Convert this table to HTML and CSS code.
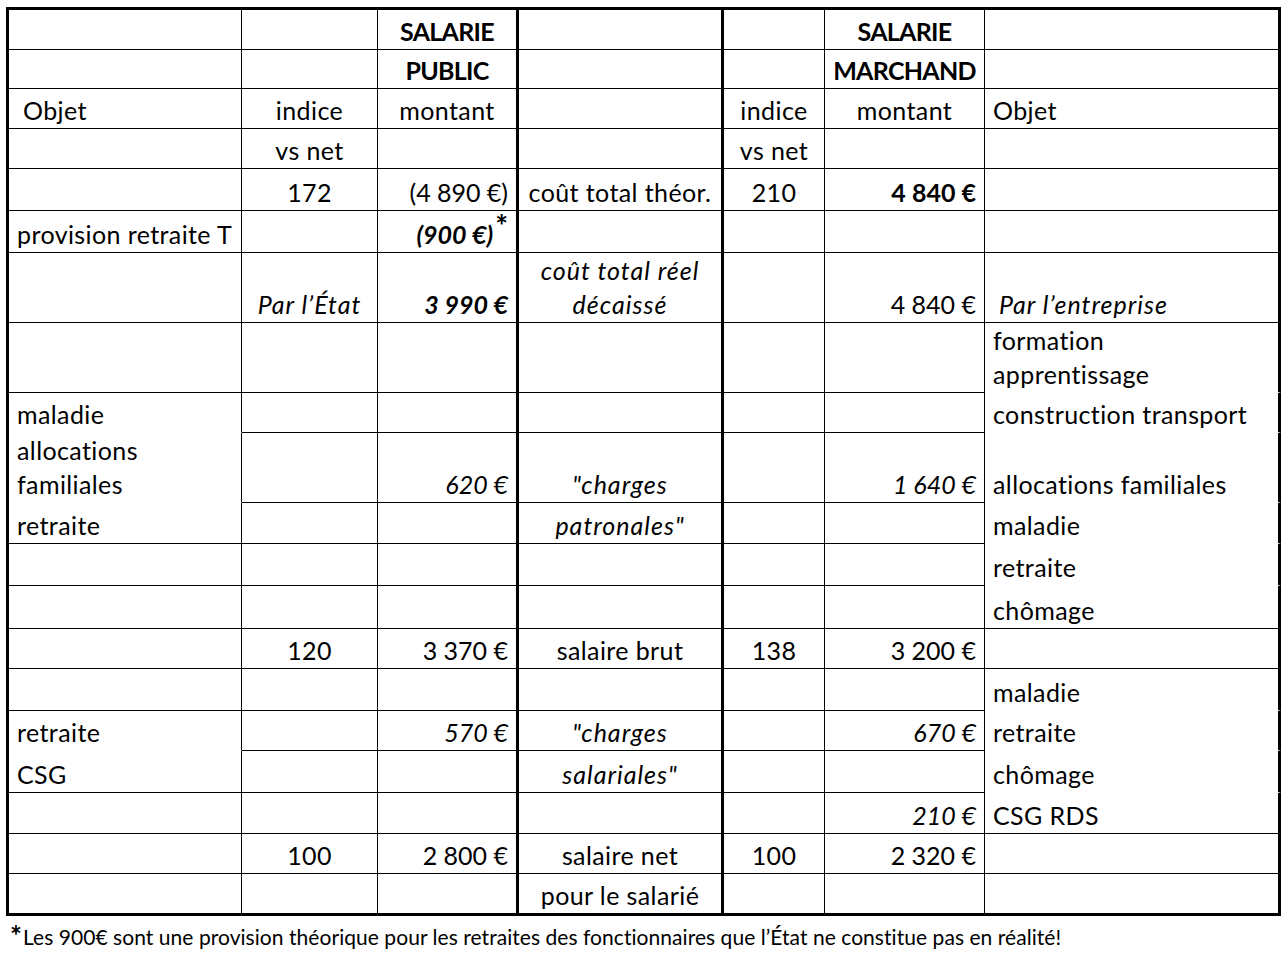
FILE: index.html
```html
<!DOCTYPE html>
<html lang="fr">
<head>
<meta charset="utf-8">
<title>Salarié public / marchand</title>
<link rel="stylesheet" href="styles.css">
</head>
<body>
<table class="sheet">
  <colgroup>
    <col class="w1"><col class="w2"><col class="w3"><col class="w4"><col class="w5"><col class="w6"><col class="w7">
  </colgroup>
  <tr class="h40">
    <td></td><td></td><td class="c b hd tk">SALARIE</td><td class="tk"></td><td></td><td class="c b hd">SALARIE</td><td class="tk"></td>
  </tr>
  <tr class="h39">
    <td></td><td></td><td class="c b hd tk">PUBLIC</td><td class="tk"></td><td></td><td class="c b hd">MARCHAND</td><td class="tk"></td>
  </tr>
  <tr class="h40">
    <td class="ind">Objet</td><td class="c">indice</td><td class="c tk">montant</td><td class="tk"></td><td class="c">indice</td><td class="c">montant</td><td class="tk">Objet</td>
  </tr>
  <tr class="h40">
    <td></td><td class="c">vs net</td><td class="tk"></td><td class="tk"></td><td class="c">vs net</td><td></td><td class="tk"></td>
  </tr>
  <tr class="h42">
    <td></td><td class="c">172</td><td class="r tk">(4&#8239;890&nbsp;€)</td><td class="c tk">coût total théor.</td><td class="c">210</td><td class="r b">4&#8239;840&nbsp;€</td><td class="tk"></td>
  </tr>
  <tr class="h42">
    <td>provision retraite T</td><td></td><td class="r b i tk">(900&nbsp;€)<span class="star">*</span></td><td class="tk"></td><td></td><td></td><td class="tk"></td>
  </tr>
  <tr class="h69">
    <td></td><td class="c i">Par l’État</td><td class="r b i tk">3&#8239;990&nbsp;€</td><td class="c i tk">coût total réel<br>décaissé</td><td></td><td class="r">4&#8239;840&nbsp;€</td><td class="i ind tk">Par l’entreprise</td>
  </tr>
  <tr class="h70">
    <td></td><td></td><td class="tk"></td><td class="tk"></td><td></td><td></td><td class="tk open">formation<br>apprentissage</td>
  </tr>
  <tr class="h40">
    <td class="open">maladie</td><td></td><td class="tk"></td><td class="tk"></td><td></td><td></td><td class="tk open">construction transport</td>
  </tr>
  <tr class="h70">
    <td class="open">allocations<br>familiales</td><td></td><td class="r i num tk">620&nbsp;€</td><td class="c i tk">"charges</td><td></td><td class="r i num">1&#8239;640&nbsp;€</td><td class="tk open">allocations familiales</td>
  </tr>
  <tr class="h41">
    <td>retraite</td><td></td><td class="tk"></td><td class="c i tk">patronales"</td><td></td><td></td><td class="tk open">maladie</td>
  </tr>
  <tr class="h42">
    <td></td><td></td><td class="tk"></td><td class="tk"></td><td></td><td></td><td class="tk open">retraite</td>
  </tr>
  <tr class="h43">
    <td></td><td></td><td class="tk"></td><td class="tk"></td><td></td><td></td><td class="tk">chômage</td>
  </tr>
  <tr class="h40">
    <td></td><td class="c">120</td><td class="r tk">3&#8239;370&nbsp;€</td><td class="c tk">salaire brut</td><td class="c">138</td><td class="r">3&#8239;200&nbsp;€</td><td class="tk"></td>
  </tr>
  <tr class="h42">
    <td></td><td></td><td class="tk"></td><td class="tk"></td><td></td><td></td><td class="tk open">maladie</td>
  </tr>
  <tr class="h40">
    <td class="open">retraite</td><td></td><td class="r i num tk">570&nbsp;€</td><td class="c i tk">"charges</td><td></td><td class="r i num">670&nbsp;€</td><td class="tk open">retraite</td>
  </tr>
  <tr class="h42">
    <td>CSG</td><td></td><td class="tk"></td><td class="c i tk">salariales"</td><td></td><td></td><td class="tk open">chômage</td>
  </tr>
  <tr class="h41">
    <td></td><td></td><td class="tk"></td><td class="tk"></td><td></td><td class="r i num">210&nbsp;€</td><td class="tk">CSG RDS</td>
  </tr>
  <tr class="h40">
    <td></td><td class="c">100</td><td class="r tk">2&#8239;800&nbsp;€</td><td class="c tk">salaire net</td><td class="c">100</td><td class="r">2&#8239;320&nbsp;€</td><td class="tk"></td>
  </tr>
  <tr class="h42 last">
    <td></td><td></td><td class="tk"></td><td class="c tk">pour le salarié</td><td></td><td></td><td class="tk"></td>
  </tr>
</table>
<p class="note"><span class="note-star">*</span>Les 900€ sont une provision théorique pour les retraites des fonctionnaires que l’État ne constitue pas en réalité!</p>
</body>
</html>
```

FILE: styles.css
```css
html, body {
  margin: 0;
  padding: 0;
  background: #ffffff;
}

body {
  font-family: "Lato", "Open Sans", sans-serif;
  color: #000000;
}

.sheet {
  margin: 7px 0 0 6px;
  border-collapse: separate;
  border-spacing: 0;
  table-layout: fixed;
  width: 1275px;
  border-top: 3px solid #000;
  border-left: 3px solid #000;
  font-size: 25px;
  letter-spacing: 0.4px;
  line-height: 34px;
}

.w1 { width: 233px; }
.w2 { width: 136px; }
.w3 { width: 141px; }
.w4 { width: 205px; }
.w5 { width: 101px; }
.w6 { width: 160px; }
.w7 { width: 296px; }

.sheet td {
  box-sizing: border-box;
  border-right: 1px solid #000;
  border-bottom: 1px solid #000;
  padding: 0 8px 1px 8px;
  vertical-align: bottom;
  white-space: nowrap;
  overflow: visible;
}

.sheet td.tk { border-right-width: 3px; }
.sheet td.open { border-bottom-color: transparent; }
.sheet tr.last td { border-bottom-width: 3px; }

.h39 td { height: 39px; }
.h40 td { height: 40px; }
.h41 td { height: 41px; }
.h42 td { height: 42px; }
.h43 td { height: 43px; }
.h69 td { height: 69px; }
.h70 td { height: 70px; }

.c { text-align: center; }
.r { text-align: right; }
.b { font-weight: 700; letter-spacing: 0; }
.sheet td.hd { letter-spacing: -0.7px; }
.i { font-style: italic; letter-spacing: 1px; }
.sheet td.num { letter-spacing: 0; }
.b.i { letter-spacing: 0; }
.sheet td.ind { padding-left: 14px; }

.star {
  font-style: normal;
  font-weight: 700;
  font-size: 30px;
  position: relative;
  top: -7px;
  margin-left: 2px;
  line-height: 0;
}

.note {
  margin: 9px 0 0 10px;
  font-size: 21px;
  letter-spacing: 0.05px;
  line-height: 24px;
}

.note-star {
  font-weight: 700;
  font-size: 28px;
  position: relative;
  top: 1px;
  margin-right: 1px;
  line-height: 0;
}
```
